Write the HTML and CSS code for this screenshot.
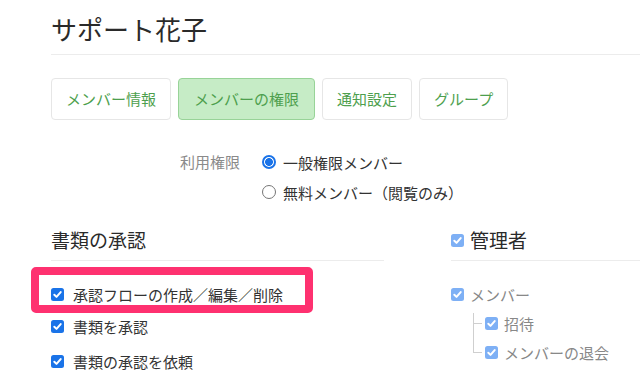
FILE: index.html
```html
<!DOCTYPE html>
<html lang="ja">
<head>
<meta charset="utf-8">
<link rel="stylesheet" href="styles.css">
</head>
<body>
<div class="page">
  <header class="title-bar"><h1 class="title">サポート花子</h1></header>

  <nav class="tabs">
    <span class="tab">メンバー情報</span>
    <span class="tab tab-active">メンバーの権限</span>
    <span class="tab">通知設定</span>
    <span class="tab">グループ</span>
  </nav>

  <div class="perm">
    <div class="perm-label">利用権限</div>
    <div class="perm-options">
      <div class="radio-row"><span class="radio radio-on"></span><span>一般権限メンバー</span></div>
      <div class="radio-row"><span class="radio"></span><span>無料メンバー（閲覧のみ）</span></div>
    </div>
  </div>

  <div class="sections">
    <section class="col">
      <h2 class="sec-head">書類の承認</h2>
      <ul class="items">
        <li class="item item-highlight">
          <span class="hl-box"></span>
          <svg class="cb" viewBox="0 0 13 13"><rect width="13" height="13" rx="2.5" class="cb-fill"/><path d="M3.3 6.7 L5.5 8.9 L9.7 4.1" class="cb-check"/></svg>
          <span>承認フローの作成／編集／削除</span>
        </li>
        <li class="item">
          <svg class="cb" viewBox="0 0 13 13"><rect width="13" height="13" rx="2.5" class="cb-fill"/><path d="M3.3 6.7 L5.5 8.9 L9.7 4.1" class="cb-check"/></svg>
          <span>書類を承認</span>
        </li>
        <li class="item item-last">
          <svg class="cb" viewBox="0 0 13 13"><rect width="13" height="13" rx="2.5" class="cb-fill"/><path d="M3.3 6.7 L5.5 8.9 L9.7 4.1" class="cb-check"/></svg>
          <span>書類の承認を依頼</span>
        </li>
      </ul>
    </section>

    <section class="col">
      <h2 class="sec-head sec-head-cb">
        <svg class="cb" viewBox="0 0 13 13"><rect width="13" height="13" rx="2.5" class="cb-fill-light"/><path d="M3.3 6.7 L5.5 8.9 L9.7 4.1" class="cb-check"/></svg>
        <span>管理者</span>
      </h2>
      <ul class="tree">
        <li class="tree-item">
          <div class="tree-row">
            <svg class="cb" viewBox="0 0 13 13"><rect width="13" height="13" rx="2.5" class="cb-fill-light"/><path d="M3.3 6.7 L5.5 8.9 L9.7 4.1" class="cb-check"/></svg>
            <span>メンバー</span>
          </div>
          <ul class="subtree">
            <li class="tree-row sub-row">
              <svg class="cb" viewBox="0 0 13 13"><rect width="13" height="13" rx="2.5" class="cb-fill-light"/><path d="M3.3 6.7 L5.5 8.9 L9.7 4.1" class="cb-check"/></svg>
              <span>招待</span>
            </li>
            <li class="tree-row sub-row">
              <svg class="cb" viewBox="0 0 13 13"><rect width="13" height="13" rx="2.5" class="cb-fill-light"/><path d="M3.3 6.7 L5.5 8.9 L9.7 4.1" class="cb-check"/></svg>
              <span>メンバーの退会</span>
            </li>
          </ul>
        </li>
      </ul>
    </section>
  </div>
</div>
</body>
</html>
```

FILE: styles.css
```css
* { box-sizing: border-box; }
html, body { margin: 0; padding: 0; background: #fff; }
body {
  font-family: "Noto Sans CJK JP", "Noto Sans", sans-serif;
  color: #333;
  width: 640px;
  height: 383px;
  overflow: hidden;
}
.page { padding-left: 51px; padding-top: 11px; }

.title-bar {
  border-bottom: 1px solid #ececec;
  padding-bottom: 7px;
}
.title {
  margin: 0;
  font-size: 26px;
  line-height: 36px;
  font-weight: 400;
  color: #2a2a2a;
}

.tabs {
  display: flex;
  gap: 7px;
  margin-top: 23px;
}
.tab {
  display: flex;
  align-items: center;
  height: 42px;
  padding: 0 14px 2px;
  border: 1px solid #e6e6e6;
  border-radius: 4px;
  color: #4e9f4e;
  font-size: 15px;
  background: #fff;
}
.tab-active {
  background: #c6ecc6;
  border-color: #98d398;
  padding: 0 15px 2px;
}

.perm {
  display: flex;
  margin-top: 27px;
  padding-left: 129px;
  font-size: 15px;
}
.perm-label {
  width: 60px;
  line-height: 30px;
  color: #8a8a8a;
  margin-right: 22px;
}
.perm-options { display: flex; flex-direction: column; }
.radio-row {
  display: flex;
  align-items: center;
  height: 30px;
  gap: 7px;
  color: #333;
}
.radio {
  width: 14px;
  height: 14px;
  border-radius: 50%;
  border: 1px solid #767676;
  background: #fff;
}
.radio-on {
  border: 2px solid #1a73e8;
  background: radial-gradient(circle, #1a73e8 0 3.6px, #fff 4.2px);
}

.sections {
  display: grid;
  grid-template-columns: 333px 1fr;
  column-gap: 67px;
  margin-top: 19px;
}
.sec-head {
  margin: 0;
  font-size: 19px;
  line-height: 28px;
  font-weight: 400;
  padding-bottom: 6px;
  border-bottom: 1px solid #ececec;
  color: #2a2a2a;
}
.sec-head-cb { display: flex; align-items: center; gap: 6px; }

.cb { width: 13px; height: 13px; flex: none; display: block; }
.cb-fill { fill: #1a73e8; }
.cb-fill-light { fill: #7eb0f5; }
.cb-check { fill: none; stroke: #fff; stroke-width: 2; stroke-linecap: round; stroke-linejoin: round; }

.items {
  list-style: none;
  margin: 18px 0 0;
  padding: 0;
  display: flex;
  flex-direction: column;
}
.item {
  display: flex;
  align-items: center;
  gap: 9px;
  height: 30px;
  font-size: 15px;
  color: #333;
}
.item-highlight { position: relative; margin-bottom: 2px; }
.item-last { margin-top: 5px; }
.hl-box {
  position: absolute;
  left: -20px;
  top: -12px;
  width: 282px;
  height: 46px;
  border: 8px solid #fe3170;
  border-radius: 5px;
  pointer-events: none;
}

.tree, .subtree { list-style: none; margin: 0; padding: 0; }
.tree { margin-top: 19px; }
.subtree { padding-left: 34px; }
.tree-row {
  display: flex;
  align-items: center;
  gap: 6px;
  height: 29px;
  font-size: 15px;
  color: #888;
}
.sub-row { position: relative; }
.sub-row::before {
  content: "";
  position: absolute;
  left: -12px;
  width: 8px;
  border-left: 1px solid #cfcfcf;
  border-bottom: 1px solid #cfcfcf;
}
.sub-row:first-child::before { top: 4px; height: 10px; }
.sub-row + .sub-row::before { top: -15px; height: 29px; }
```
